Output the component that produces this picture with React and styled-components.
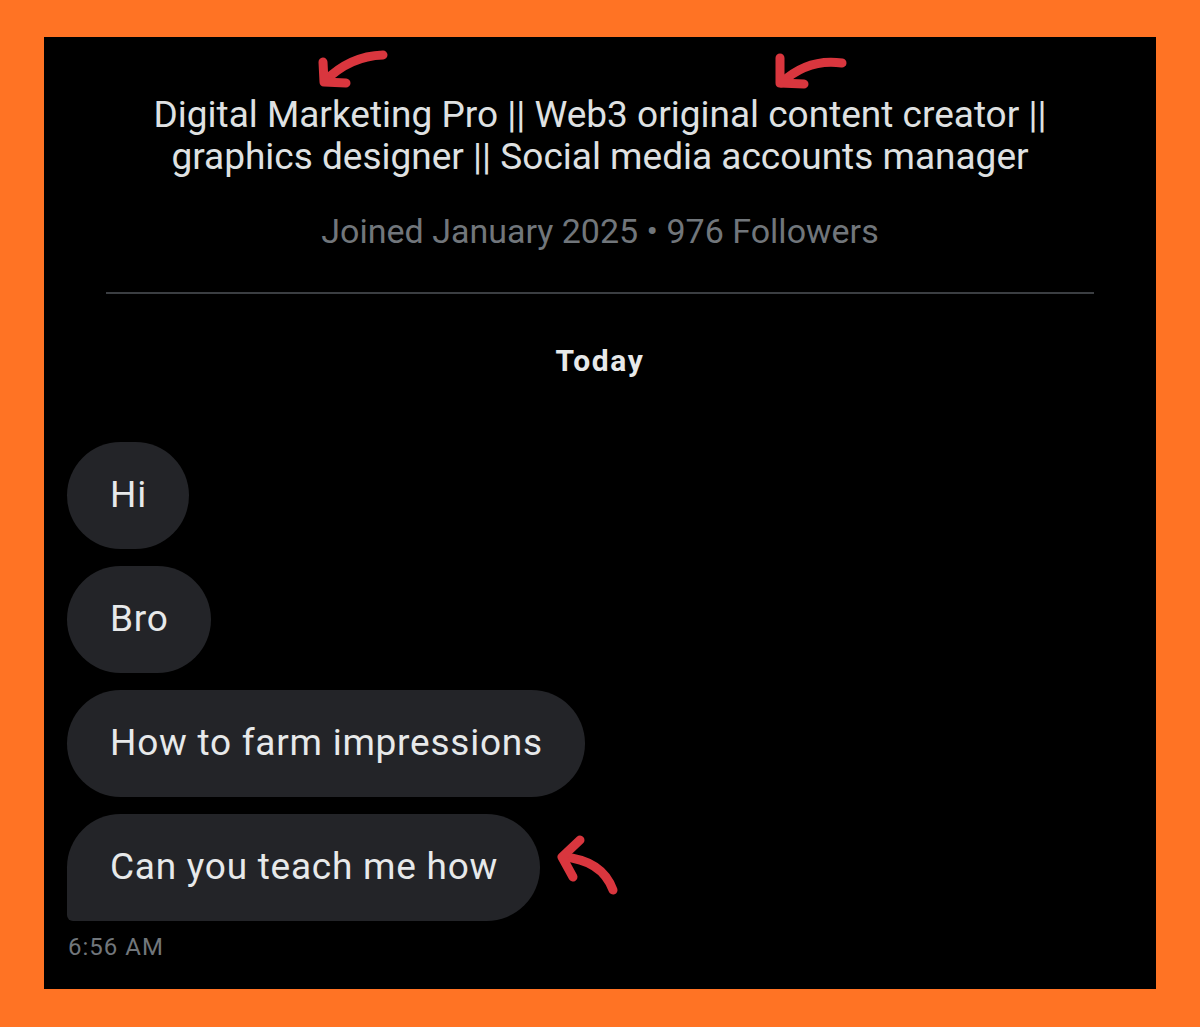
import styled, { createGlobalStyle } from 'styled-components';

const GlobalStyle = createGlobalStyle`
  html, body {
    margin: 0;
    padding: 0;
    background: #ff7324;
  }
  body {
    font-family: Roboto, "Liberation Sans", sans-serif;
  }
`

const Frame = styled.div`
  width: 1200px;
  height: 1027px;
  box-sizing: border-box;
  padding: 37px 44px 38px 44px;
  background: #ff7324;
`

const Panel = styled.main`
  position: relative;
  height: 100%;
  background: #000;
  display: flex;
  flex-direction: column;
  padding-top: 57px;
  box-sizing: border-box;
`

const Bio = styled.p`
  margin: 0;
  text-align: center;
  color: #dfe1e2;
  font-size: 37px;
  line-height: 42px;
`

const Meta = styled.p`
  margin: 33px 0 0;
  text-align: center;
  color: #71767b;
  font-size: 34px;
  line-height: 40px;
`

const Divider = styled.hr`
  margin: 41px 62px 0;
  border: 0;
  height: 2px;
  background: #3b3e42;
`

const DayLabel = styled.h2`
  margin: 50px 0 0;
  text-align: center;
  color: #e7e9ea;
  font-size: 30px;
  font-weight: 700;
  letter-spacing: 1.6px;
  line-height: 34px;
`

const Thread = styled.ul`
  list-style: none;
  margin: 64px 0 0;
  padding: 0 0 0 23px;
  display: flex;
  flex-direction: column;
  align-items: flex-start;
  gap: 17px;
`

const Bubble = styled.li`
  background: #232428;
  color: #e7e9ea;
  font-size: 37px;
  letter-spacing: 0.75px;
  line-height: 42px;
  padding: 32px 42px 33px 43px;
  border-radius: ${p => (p.$last ? '54px 54px 54px 6px' : '54px')};
`

const Time = styled.span`
  margin: 12px 0 0 24px;
  color: #71767b;
  font-size: 24px;
  line-height: 28px;
  letter-spacing: 1px;
`

const Arrow = styled.svg`
  position: absolute;
  left: ${p => p.$x}px;
  top: ${p => p.$y}px;
  overflow: visible;
  fill: none;
  stroke: #d9363e;
  stroke-width: 9;
  stroke-linecap: round;
  stroke-linejoin: round;
`

const messages = ['Hi', 'Bro', 'How to farm impressions', 'Can you teach me how']

function App() {
  return (
    <>
      <GlobalStyle />
      <Frame>
        <Panel>
          <Arrow $x={271} $y={11} width="78" height="44">
            <path d="M68 7 Q35 8 10 33" />
            <path d="M8 14 L9 34 L31 35" />
          </Arrow>
          <Arrow $x={726} $y={11} width="80" height="44">
            <path d="M72 15 Q38 10 11 35" />
            <path d="M10 10 L10 35 L34 36" />
          </Arrow>
          <Arrow $x={506} $y={793} width="75" height="70">
            <path d="M63 60 Q52 30 13 27" />
            <path d="M30 10 L12 27 L23 47" />
          </Arrow>

          <Bio>
            Digital Marketing Pro || Web3 original content creator ||<br />
            graphics designer || Social media accounts manager
          </Bio>
          <Meta>Joined January 2025 • 976 Followers</Meta>
          <Divider />
          <DayLabel>Today</DayLabel>
          <Thread>
            {messages.map((m, i) => (
              <Bubble key={m} $last={i === messages.length - 1}>{m}</Bubble>
            ))}
          </Thread>
          <Time>6:56 AM</Time>
        </Panel>
      </Frame>
    </>
  )
}

export default App;
